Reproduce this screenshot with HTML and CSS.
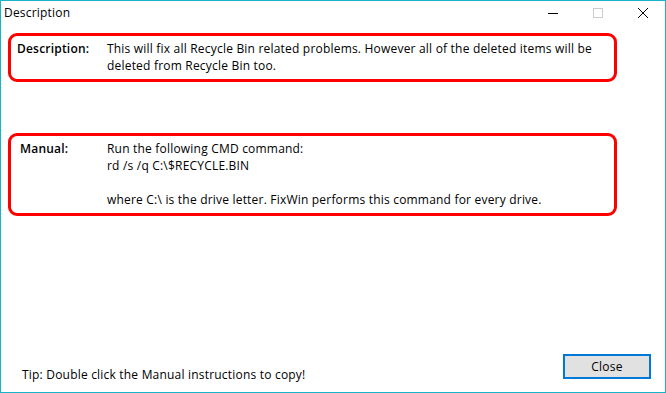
FILE: index.html
```html
<!DOCTYPE html>
<html lang="en">
<head>
  <meta charset="UTF-8">
  <title>Description</title>
  <link rel="stylesheet" href="styles.css">
</head>
<body>
  <div class="window">
    <div class="titlebar">
      <span class="title">Description</span>
      <div class="controls">
        <span class="ctl">
          <svg width="10" height="10" viewBox="0 0 10 10"><path d="M0 5.5h10" stroke="#000" stroke-width="1"/></svg>
        </span>
        <span class="ctl">
          <svg width="10" height="10" viewBox="0 0 10 10"><rect x="0.5" y="0.5" width="9" height="9" fill="none" stroke="#ccc" stroke-width="1"/></svg>
        </span>
        <span class="ctl">
          <svg width="10" height="10" viewBox="0 0 10 10"><path d="M0 0L10 10M10 0L0 10" stroke="#000" stroke-width="1"/></svg>
        </span>
      </div>
    </div>

    <div class="content">
      <div class="panel">
        <div class="label">Description:</div>
        <div class="text">This will fix all Recycle Bin related problems. However all of the deleted items will be deleted from Recycle Bin too.</div>
      </div>

      <div class="panel manual">
        <div class="label">Manual:</div>
        <div class="text">Run the following CMD command:<br>rd /s /q C:\$RECYCLE.BIN<br><br>where C:\ is the drive letter. FixWin performs this command for every drive.</div>
      </div>
    </div>

    <div class="footer">
      <span class="tip">Tip: Double click the Manual instructions to copy!</span>
      <button class="close-btn">Close</button>
    </div>
  </div>
</body>
</html>
```

FILE: styles.css
```css
body {
  margin: 0;
  padding: 0;
  font-family: 'Open Sans', 'Noto Sans', sans-serif;
  font-size: 12px;
  letter-spacing: 0.2px;
  color: #000;
  background-color: #fff;
}

.window {
  width: 666px;
  height: 393px;
  box-sizing: border-box;
  border: 1px solid #17b4c8;
  display: flex;
  flex-direction: column;
}

.titlebar {
  height: 23px;
  display: flex;
  align-items: center;
  justify-content: space-between;
  padding-left: 3px;
}

.title {
  line-height: 17px;
}

.controls {
  display: flex;
  align-items: center;
  padding-right: 17px;
  gap: 35px;
}

.ctl {
  display: flex;
  width: 10px;
  height: 10px;
}

.content {
  flex: 1;
  padding: 9px 48px 0 7px;
  display: flex;
  flex-direction: column;
  gap: 51px;
}

.panel {
  border: 3px solid #ff0000;
  border-radius: 9px;
  padding: 4px 6px 5px 6px;
  display: grid;
  grid-template-columns: 90px 1fr;
  line-height: 17px;
}

.manual .label {
  padding-left: 3px;
}

.label {
  font-weight: 600;
}

.footer {
  display: flex;
  justify-content: space-between;
  align-items: flex-end;
  padding: 0 14px 9px 21px;
}

.tip {
  line-height: 17px;
}

.close-btn {
  width: 88px;
  height: 25px;
  margin-bottom: 4px;
  background-color: #e1e1e1;
  border: 2px solid #0078d7;
  font-family: inherit;
  font-size: 12px;
  letter-spacing: inherit;
  color: #000;
  padding: 0;
}
```
